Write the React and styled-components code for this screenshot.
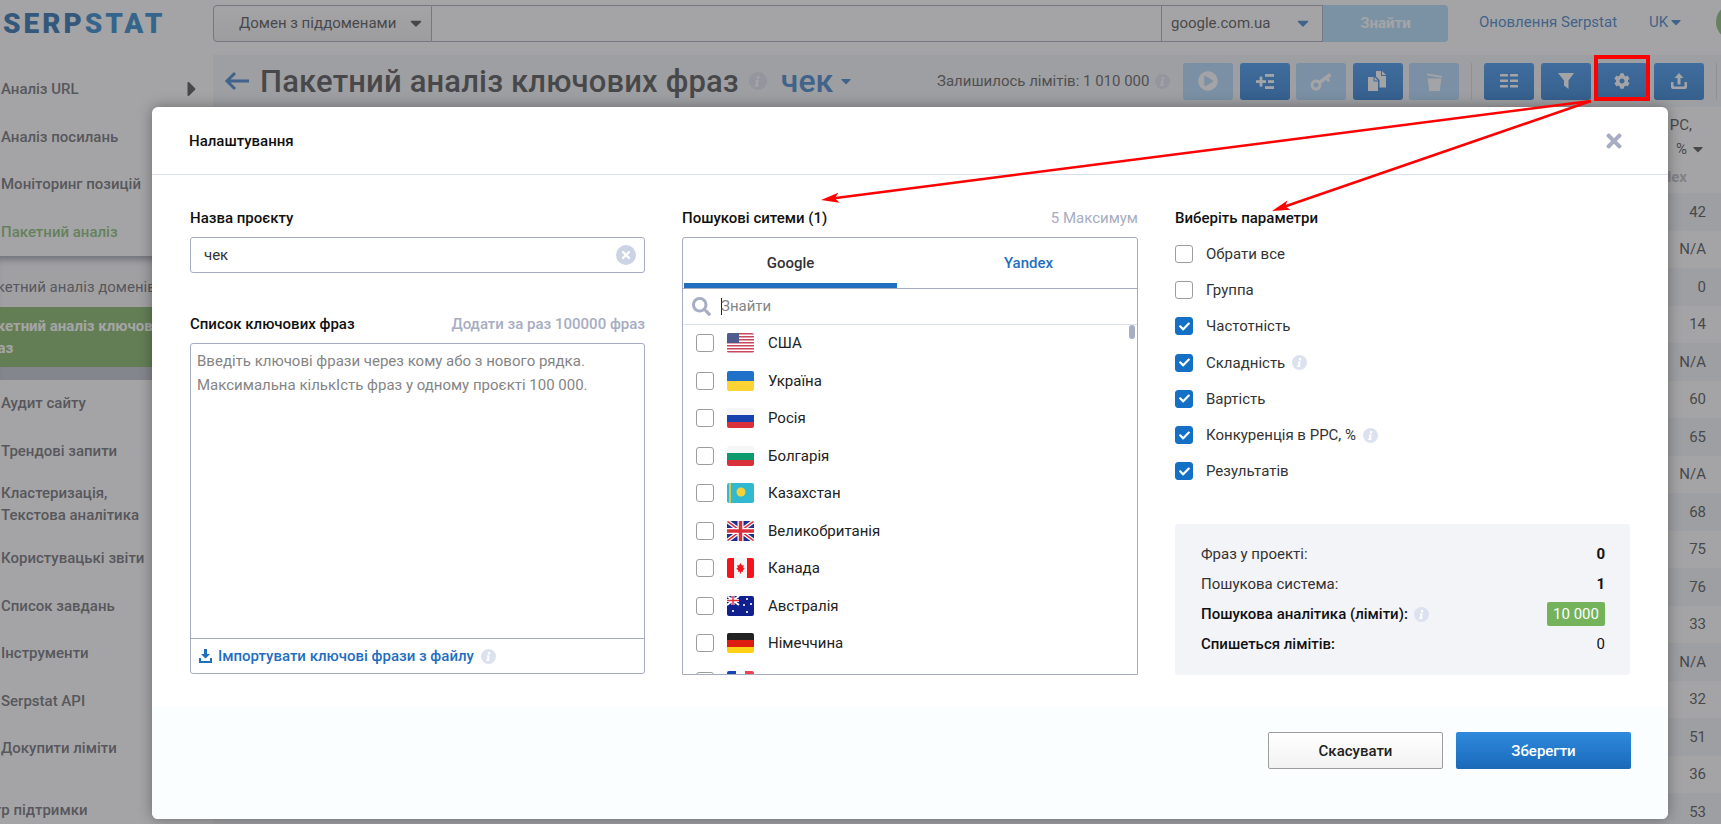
import React from 'react'
import styled, { createGlobalStyle } from 'styled-components'
import { FaCog, FaPlayCircle, FaCaretDown, FaCaretRight, FaSearch, FaTimes, FaCheck, FaInfo } from 'react-icons/fa'

const Global = createGlobalStyle`
  html, body { margin: 0; padding: 0; width: 1721px; height: 824px; overflow: hidden; background: #fff; }
  * { box-sizing: border-box; }
  body { font-family: Roboto, "Liberation Sans", sans-serif; font-size: 15px; color: #000; }
`

const Page = styled.div`
  position: relative;
  width: 1721px;
  height: 824px;
  overflow: hidden;
  display: flex;
  flex-direction: column;
  background: #fff;
`

const TopBar = styled.div`
  height: 50px;
  display: flex;
  align-items: center;
  flex-shrink: 0;
`

const Logo = styled.div`
  width: 213px;
  flex-shrink: 0;
  padding-left: 3px;
  margin-top: -4px;
  font-size: 28px;
  font-weight: 900;
  letter-spacing: 3px;
  color: #05589f;
  span { color: #0a74c4; }
`

const SearchGroup = styled.div`
  display: flex;
  flex-shrink: 0;
  height: 37px;
  margin-top: -4px;
`

const DomainSelect = styled.div`
  width: 219px;
  display: flex;
  align-items: center;
  gap: 11px;
  padding-left: 25px;
  border: 1px solid #9a9dae;
  border-radius: 4px 0 0 4px;
  background: linear-gradient(#fff, #f0f0f0);
  white-space: nowrap;
  color: #333;
`

const SearchInput = styled.div`
  width: 730px;
  border: 1px solid #9a9dae;
  border-left: 0;
  background: #fff;
`

const EngineSelect = styled.div`
  width: 161px;
  display: flex;
  align-items: center;
  justify-content: space-between;
  padding: 0 10px 0 9px;
  border: 1px solid #9a9dae;
  border-left: 0;
  background: #fff;
  color: #333;
  svg { color: #1f6fbf; }
`

const FindButton = styled.div`
  width: 125px;
  display: flex;
  align-items: center;
  justify-content: center;
  border-radius: 0 4px 4px 0;
  background: #a5d5fb;
  color: #fff;
  font-weight: 700;
`

const TopLink = styled.div`
  flex-shrink: 0;
  white-space: nowrap;
  color: #1f6fbf;
  margin-left: ${p => p.$gap}px;
  display: flex;
  align-items: center;
  margin-top: -6px;
`

const Avatar = styled.div`
  width: 36px;
  height: 36px;
  flex-shrink: 0;
  border-radius: 50%;
  background: #74b25b;
  margin-left: 32px;
  margin-top: -6px;
`

const Body = styled.div`
  flex: 1;
  display: flex;
  min-height: 0;
`

const Sidebar = styled.div`
  width: 213px;
  flex-shrink: 0;
  padding-top: 18px;
  overflow: hidden;
`

const MenuItem = styled.div`
  position: relative;
  height: ${p => p.$h || 47.5}px;
  padding-top: 10px;
  padding-left: 1px;
  margin-left: ${p => p.$shift || 0}px;
  white-space: nowrap;
  font-size: 15px;
  line-height: 22px;
  font-weight: 500;
  color: ${p => (p.$active ? '#74b25b' : '#55555c')};
  svg { position: absolute; left: 180px; top: 9px; color: #333; font-size: 24px; }
`

const SubMenu = styled.div`
  margin-top: -2px;
  margin-bottom: 2px;
  height: 124px;
  padding-top: 8px;
  background: #f6f6f8;
  box-shadow: inset 0 8px 6px -4px rgba(60, 70, 90, 0.55), inset 0 -13px 0 #b8bcc8;
`

const SubItem = styled.div`
  margin-left: -22px;
  width: 240px;
  height: ${p => (p.$active ? 60 : 43)}px;
  padding-top: ${p => (p.$active ? 8 : 12)}px;
  line-height: 22px;
  font-size: 15px;
  font-weight: ${p => (p.$active ? 700 : 400)};
  white-space: nowrap;
  background: ${p => (p.$active ? '#70ab4a' : 'transparent')};
  color: ${p => (p.$active ? '#fff' : '#55555c')};
`

const Main = styled.div`
  flex: 1;
  min-width: 0;
  padding-top: 5px;
  display: flex;
  flex-direction: column;
`

const TitleBar = styled.div`
  height: 52px;
  flex-shrink: 0;
  display: flex;
  align-items: center;
  padding: 0 4px 0 11px;
  background: #f2f3f7;
`

const BackArrow = styled.svg`
  width: 25px;
  height: 20px;
  margin-right: 11px;
  flex-shrink: 0;
`

const Title = styled.h1`
  margin: 0;
  font-size: 31px;
  font-weight: 500;
  color: #333;
  letter-spacing: 0.15px;
  white-space: nowrap;
`

const ProjectName = styled.div`
  display: flex;
  align-items: center;
  gap: 5px;
  font-size: 32px;
  font-weight: 500;
  color: #1f6fbf;
  margin-left: 14px;
  svg { font-size: 16px; }
`

const Limits = styled.div`
  margin-left: auto;
  margin-right: 13px;
  display: flex;
  align-items: center;
  white-space: nowrap;
  color: #444;
`

const ToolButton = styled.div`
  width: 50px;
  height: 37px;
  flex-shrink: 0;
  margin-right: 6.4px;
  border-radius: 3px;
  display: flex;
  align-items: center;
  justify-content: center;
  color: #fff;
  background: ${p => (p.$off ? '#a5d3fb' : 'linear-gradient(#2285ec, #0c68c8)')};
`

const ToolDivider = styled.div`
  width: 1px;
  height: 37px;
  flex-shrink: 0;
  background: #d2d4dc;
  margin: 0 ${p => p.$after || 0}px 0 6px;
`

const Table = styled.div`
  flex: 1;
  min-height: 0;
  display: flex;
  flex-direction: column;
  align-items: flex-end;
`

const HeadCell = styled.div`
  width: 100%;
  height: 86px;
  flex-shrink: 0;
  padding: 6px 15px 0 0;
  text-align: right;
  color: #333;
`

const HeadLine = styled.div`
  line-height: 24px;
  margin-right: ${p => p.$right || 0}px;
  svg { vertical-align: -3px; margin-left: 3px; }
`

const HeadSub = styled.div`
  margin: 4px 19px 0 0;
  line-height: 24px;
  font-weight: 700;
  color: #b4b4b4;
`

const Row = styled.div`
  width: 100%;
  height: 37.5px;
  flex-shrink: 0;
  padding-right: 15px;
  display: flex;
  align-items: center;
  justify-content: flex-end;
  color: #333;
  background: ${p => (p.$odd ? '#fff' : '#f2f3f7')};
`

const Dim = styled.div`
  position: absolute;
  inset: 0;
  padding: 107px 53px 5px 152px;
  display: flex;
  background: rgba(90, 90, 92, 0.55);
`

const Modal = styled.div`
  flex: 1;
  display: flex;
  flex-direction: column;
  border-radius: 6px;
  background: #fff;
  box-shadow: 0 0 14px rgba(0, 0, 0, 0.35);
  overflow: hidden;
`

const ModalHead = styled.div`
  height: 68px;
  flex-shrink: 0;
  display: flex;
  align-items: center;
  justify-content: space-between;
  padding: 0 43px 0 37px;
  border-bottom: 1px solid #d9dfee;
  font-weight: 500;
  color: #111;
  svg { color: #a7adc2; font-size: 22px; }
`

const Columns = styled.div`
  display: grid;
  grid-template-columns: 455px 456px 455px;
  gap: 37px;
  padding: 32px 38px 0;
  height: 532px;
  flex-shrink: 0;
`

const Column = styled.div`
  display: flex;
  flex-direction: column;
  min-width: 0;
`

const LabelRow = styled.div`
  height: 22px;
  line-height: 22px;
  flex-shrink: 0;
  display: flex;
  justify-content: space-between;
  font-weight: 500;
  color: #111;
  margin-top: ${p => p.$top || 0}px;
`

const Hint = styled.span`
  color: #a7adc2;
  font-weight: ${p => p.$weight || 400};
`

const NameInput = styled.div`
  height: 36px;
  margin-top: 8px;
  flex-shrink: 0;
  padding: 0 8px 0 13px;
  display: flex;
  align-items: center;
  justify-content: space-between;
  border: 1px solid #a7abc2;
  border-radius: 3px;
  color: #333;
`

const ClearIcon = styled.div`
  width: 20px;
  height: 20px;
  border-radius: 50%;
  background: #ccd3e4;
  color: #fff;
  display: flex;
  align-items: center;
  justify-content: center;
  font-size: 12px;
`

const KeywordBox = styled.div`
  height: 331px;
  margin-top: 8px;
  flex-shrink: 0;
  display: flex;
  flex-direction: column;
  border: 1px solid #a7abc2;
  border-radius: 3px;
`

const Placeholder = styled.div`
  flex: 1;
  padding: 5px 6px;
  line-height: 24px;
  color: #858585;
  border-bottom: 1px solid #a7abc2;
`

const ImportRow = styled.div`
  height: 34px;
  flex-shrink: 0;
  padding-left: 8px;
  display: flex;
  align-items: center;
  font-weight: 500;
  color: #1f6fbf;
`

const InfoDot = styled.span`
  display: inline-flex;
  align-items: center;
  justify-content: center;
  flex-shrink: 0;
  width: ${p => p.$size || 15}px;
  height: ${p => p.$size || 15}px;
  border-radius: 50%;
  margin-left: ${p => p.$gap ?? 6}px;
  background: #dbe1ef;
  color: #fff;
  font-size: ${p => (p.$size || 15) * 0.6}px;
  svg { transform: skewX(-10deg); }
`

const EngineBox = styled.div`
  height: 438px;
  margin-top: 8px;
  flex-shrink: 0;
  border: 1px solid #a7abc2;
  border-top-left-radius: 3px;
  border-top-right-radius: 3px;
  display: flex;
  flex-direction: column;
  overflow: hidden;
`

const Tabs = styled.div`
  height: 51px;
  flex-shrink: 0;
  display: grid;
  grid-template-columns: 213px 1fr;
  column-gap: 23px;
  padding-left: 1px;
  border-bottom: 1px solid #a7abc2;
`

const Tab = styled.div`
  display: flex;
  align-items: center;
  justify-content: center;
  padding-top: 5px;
  font-weight: 500;
  color: ${p => (p.$active ? '#333' : '#1f6fbf')};
  border-bottom: 5px solid ${p => (p.$active ? '#1f6fbf' : 'transparent')};
`

const FindRow = styled.div`
  height: 35.5px;
  flex-shrink: 0;
  display: flex;
  align-items: center;
  padding-left: 9px;
  border-bottom: 1px solid #dde2ef;
  color: #858585;
  svg { color: #a7adc2; font-size: 19px; margin-right: 10px; }
`

const Caret = styled.span`
  width: 1px;
  height: 17px;
  background: #222;
  margin-right: -1px;
`

const EngineList = styled.div`
  position: relative;
  flex: 1;
  min-height: 0;
  overflow: hidden;
`

const ScrollThumb = styled.div`
  position: absolute;
  top: 0;
  right: 2px;
  width: 6px;
  height: 14px;
  border-radius: 3px;
  background: #a7adc2;
`

const EngineRow = styled.div`
  height: 37.5px;
  display: flex;
  align-items: center;
  padding-left: 13px;
  color: #222;
`

const Box = styled.span`
  width: 18px;
  height: 18px;
  flex-shrink: 0;
  border-radius: 3px;
  display: inline-flex;
  align-items: center;
  justify-content: center;
  border: 1px solid ${p => (p.$on ? '#1470c4' : '#9d9d9d')};
  background: ${p => (p.$on ? '#1470c4' : '#fff')};
  color: #fff;
  font-size: 11px;
`

const FlagWrap = styled.svg`
  width: 27px;
  height: 20px;
  margin: 0 14px 0 13px;
  flex-shrink: 0;
  border-radius: 2px;
`

const ParamList = styled.div`
  margin-top: 7px;
  flex-shrink: 0;
  display: flex;
  flex-direction: column;
`

const ParamRow = styled.div`
  height: 36.2px;
  display: flex;
  align-items: center;
  color: #333;
  ${Box} { margin-right: 13px; }
`

const Summary = styled.div`
  margin-top: 35px;
  height: 151px;
  flex-shrink: 0;
  padding: 15px 25px 0 26px;
  border-radius: 3px;
  background: #f3f4f8;
`

const SumRow = styled.div`
  height: 30px;
  display: flex;
  align-items: center;
  justify-content: space-between;
  font-weight: ${p => (p.$bold ? 500 : 400)};
  color: ${p => (p.$bold ? '#111' : '#333')};
`

const SumLabel = styled.span`
  display: flex;
  align-items: center;
`

const SumValue = styled.span`
  font-weight: ${p => (p.$bold ? 700 : 400)};
  color: #111;
`

const Badge = styled.span`
  width: 58px;
  height: 24px;
  display: flex;
  align-items: center;
  justify-content: center;
  border-radius: 2px;
  background: #74b25b;
  color: #fff;
  font-weight: 400;
`

const Footer = styled.div`
  flex: 1;
  display: flex;
  justify-content: flex-end;
  gap: 13px;
  padding: 25px 37px 0 0;
  background: #fbfefe;
`

const Button = styled.button`
  width: 175px;
  height: 37px;
  border-radius: 2px;
  font-family: inherit;
  font-size: 15px;
  font-weight: 500;
  color: ${p => (p.$primary ? '#fff' : '#222')};
  border: ${p => (p.$primary ? '0' : '1px solid #9d9d9d')};
  background: ${p => (p.$primary ? 'linear-gradient(#2f8add, #1a69b8)' : 'linear-gradient(#fff, #f2f2f2)')};
`

const ImportGlyph = styled.svg`
  width: 13px;
  height: 14px;
  margin-right: 6px;
  flex-shrink: 0;
`

const Callouts = styled.svg`
  position: absolute;
  left: 0;
  top: 0;
  width: 1721px;
  height: 824px;
  pointer-events: none;
`

const flags = {
  us: (
    <>
      <rect width="27" height="20" fill="#fff" />
      {[0, 3, 6, 9, 12, 15, 18].map(y => <rect key={y} y={y} width="27" height="1.500" fill="#c9475c" />)}
      <rect width="12" height="10" fill="#4f5a8f" />
    </>
  ),
  ua: (
    <>
      <rect width="27" height="10" fill="#1f72c8" />
      <rect y="10" width="27" height="10" fill="#fdd433" />
    </>
  ),
  ru: (
    <>
      <rect width="27" height="7" fill="#f6f6f6" />
      <rect y="7" width="27" height="7" fill="#1742b0" />
      <rect y="14" width="27" height="6" fill="#d9303c" />
    </>
  ),
  bg: (
    <>
      <rect width="27" height="7" fill="#f6f6f6" />
      <rect y="7" width="27" height="7" fill="#0d9b6d" />
      <rect y="14" width="27" height="6" fill="#d9303c" />
    </>
  ),
  kz: (
    <>
      <rect width="27" height="20" fill="#30b9d0" />
      <circle cx="14" cy="9" r="4.500" fill="#f5d23c" />
      <rect x="2" width="2" height="20" fill="#d8c850" />
    </>
  ),
  gb: (
    <>
      <rect width="27" height="20" fill="#1f2f8f" />
      <path d="M0 0L27 20M27 0L0 20" stroke="#fff" strokeWidth="4" />
      <path d="M0 0L27 20M27 0L0 20" stroke="#d9303c" strokeWidth="1.500" />
      <path d="M13.500 0V20M0 10H27" stroke="#fff" strokeWidth="6" />
      <path d="M13.500 0V20M0 10H27" stroke="#d9303c" strokeWidth="3.500" />
    </>
  ),
  ca: (
    <>
      <rect width="27" height="20" fill="#f5f5f5" />
      <rect width="7" height="20" fill="#f4141c" />
      <rect x="20" width="7" height="20" fill="#f4141c" />
      <path d="M13.500 5l1.500 2.500 1.800-.6-.6 3 1.600.4-2 2.200.3 1.200h-2.100v1.800h-1v-1.800h-2.100l.3-1.200-2-2.200 1.600-.4-.6-3 1.800.6z" fill="#f4141c" />
    </>
  ),
  au: (
    <>
      <rect width="27" height="20" fill="#10208e" />
      <path d="M0 0L12 9M12 0L0 9" stroke="#fff" strokeWidth="2" />
      <path d="M6 0V9M0 4.500H12" stroke="#fff" strokeWidth="3" />
      <path d="M6 0V9M0 4.500H12" stroke="#e03040" strokeWidth="1.500" />
      {[[6, 15], [20, 3], [24, 8], [17, 9], [20, 16]].map(([x, y]) => <circle key={x} cx={x} cy={y} r="1.100" fill="#fff" />)}
    </>
  ),
  de: (
    <>
      <rect width="27" height="7" fill="#222" />
      <rect y="7" width="27" height="7" fill="#dd1c10" />
      <rect y="14" width="27" height="6" fill="#fdd016" />
    </>
  ),
  fr: (
    <>
      <rect width="9" height="20" fill="#1742b0" />
      <rect x="9" width="9" height="20" fill="#fff" />
      <rect x="18" width="9" height="20" fill="#ef4150" />
    </>
  ),
}

const engines = [
  ['us', 'США'], ['ua', 'Україна'], ['ru', 'Росія'], ['bg', 'Болгарія'], ['kz', 'Казахстан'],
  ['gb', 'Великобританія'], ['ca', 'Канада'], ['au', 'Австралія'], ['de', 'Німеччина'], ['fr', 'Франція'],
]

const params = [
  ['Обрати все', false], ['Группа', false], ['Частотність', true], ['Складність', true, true],
  ['Вартість', true], ['Конкуренція в PPC, %', true, true], ['Результатів', true],
]

const values = ['42', 'N/A', '0', '14', 'N/A', '60', '65', 'N/A', '68', '75', '76', '33', 'N/A', '32', '51', '36', '53']

const Info = props => (
  <InfoDot {...props}><FaInfo /></InfoDot>
)

const GridIcon = () => (
  <svg width="18" height="14" viewBox="0 0 18 14" fill="#fff">
    {[0, 5.5, 11].map(y => (
      <g key={y}>
        <rect y={y} width="8" height="2.500" rx="0.500" />
        <rect x="10" y={y} width="8" height="2.500" rx="0.500" />
      </g>
    ))}
  </svg>
)

const AddListIcon = () => (
  <svg width="18" height="15" viewBox="0 0 18 15" fill="#fff">
    <rect x="0" y="6.200" width="10" height="2.800" />
    <rect x="3.600" y="2.600" width="2.800" height="10" />
    <rect x="9" y="0" width="9" height="2.800" />
    <rect x="12" y="6.200" width="6" height="2.800" />
    <rect x="9" y="12.200" width="9" height="2.800" />
  </svg>
)

const KeyIcon = () => (
  <svg width="22" height="19" viewBox="0 0 22 19" fill="none" stroke="#fff">
    <circle cx="6" cy="13" r="4" strokeWidth="3" />
    <path d="M9.500 10.500L20.500 2.500" strokeWidth="3.500" />
    <path d="M16.500 5.500l2.500 4" strokeWidth="3" />
  </svg>
)

const CopyIcon = () => (
  <svg width="19" height="20" viewBox="0 0 19 20" fill="#fff">
    <path d="M0 6h5.500v4.500H10V20H0z" />
    <path d="M6.500 6L10 9.500H6.500z" />
    <path d="M8 0h5v5h5v11.500h-6.500V9L8 5.500z" />
    <path d="M14 0l4 4h-4z" />
  </svg>
)

const CupIcon = () => (
  <svg width="15" height="19" viewBox="0 0 15 19" fill="#fff">
    <path d="M0 1.500L15 4v1.800L0 3.300zM.8 6.500h13.400L12.800 19H2.200z" />
  </svg>
)

const FilterIcon = () => (
  <svg width="16" height="16" viewBox="0 0 16 16" fill="#fff">
    <path d="M0 0h16l-5.500 7.500V16L6 12.500v-5z" />
  </svg>
)

const UploadIcon = () => (
  <svg width="16" height="16" viewBox="0 0 16 16" fill="#fff">
    <path d="M8 0l4.500 5h-3v6.500h-3V5h-3z" />
    <path d="M0 9h2.500v3.500a1 1 0 0 0 1 1h9a1 1 0 0 0 1-1V9H16v5a2 2 0 0 1-2 2H2a2 2 0 0 1-2-2z" />
  </svg>
)

export default function App() {
  return (
    <Page>
      <Global />
      <TopBar>
        <Logo>SERP<span>STAT</span></Logo>
        <SearchGroup>
          <DomainSelect>Домен з піддоменами <FaCaretDown size={18} /></DomainSelect>
          <SearchInput />
          <EngineSelect>google.com.ua <FaCaretDown size={18} /></EngineSelect>
          <FindButton>Знайти</FindButton>
        </SearchGroup>
        <TopLink $gap={31}>Оновлення Serpstat</TopLink>
        <TopLink $gap={32}>UK<FaCaretDown size={16} /></TopLink>
        <Avatar />
      </TopBar>
      <Body>
        <Sidebar>
          <MenuItem>Аналіз URL<FaCaretRight /></MenuItem>
          <MenuItem>Аналіз посилань</MenuItem>
          <MenuItem>Моніторинг позицій</MenuItem>
          <MenuItem $active>Пакетний аналіз</MenuItem>
          <SubMenu>
            <SubItem>Пакетний аналіз доменів</SubItem>
            <SubItem $active>Пакетний аналіз ключових<br />фраз</SubItem>
          </SubMenu>
          <MenuItem>Аудит сайту</MenuItem>
          <MenuItem $h={42.5}>Трендові запити</MenuItem>
          <MenuItem $h={65}>Кластеризація,<br />Текстова аналітика</MenuItem>
          <MenuItem>Користувацькі звіти</MenuItem>
          <MenuItem>Список завдань</MenuItem>
          <MenuItem>Інструменти</MenuItem>
          <MenuItem>Serpstat API</MenuItem>
          <MenuItem $h={62}>Докупити ліміти</MenuItem>
          <MenuItem $shift={-35}>Центр підтримки</MenuItem>
        </Sidebar>
        <Main>
          <TitleBar>
            <BackArrow viewBox="0 0 25 20" fill="none" stroke="#1f6fbf" strokeWidth="3">
              <path d="M25 10H3M11 2l-8 8 8 8" />
            </BackArrow>
            <Title>Пакетний аналіз ключових фраз</Title>
            <Info $size={18} $gap={10} />
            <ProjectName>чек<FaCaretDown /></ProjectName>
            <Limits>Залишилось лімітів: 1 010 000 <Info $gap={6} /></Limits>
            <ToolButton $off><FaPlayCircle size={20} /></ToolButton>
            <ToolButton><AddListIcon /></ToolButton>
            <ToolButton $off><KeyIcon /></ToolButton>
            <ToolButton><CopyIcon /></ToolButton>
            <ToolButton $off><CupIcon /></ToolButton>
            <ToolDivider $after={12} />
            <ToolButton><GridIcon /></ToolButton>
            <ToolButton><FilterIcon /></ToolButton>
            <ToolButton><FaCog size={16} /></ToolButton>
            <ToolButton><UploadIcon /></ToolButton>
            <ToolDivider />
          </TitleBar>
          <Table>
            <HeadCell>
              <HeadLine $right={14}>PC,</HeadLine>
              <HeadLine>%<FaCaretDown size={16} /></HeadLine>
              <HeadSub>Нех</HeadSub>
            </HeadCell>
            {values.map((v, i) => <Row key={i} $odd={i % 2 === 1}>{v}</Row>)}
          </Table>
        </Main>
      </Body>

      <Dim>
        <Modal>
          <ModalHead>Налаштування <FaTimes /></ModalHead>
          <Columns>
            <Column>
              <LabelRow>Назва проєкту</LabelRow>
              <NameInput>чек <ClearIcon><FaTimes /></ClearIcon></NameInput>
              <LabelRow $top={40}>Список ключових фраз <Hint $weight={500}>Додати за раз 100000 фраз</Hint></LabelRow>
              <KeywordBox>
                <Placeholder>
                  Введіть ключові фрази через кому або з нового рядка.<br />
                  Максимальна кількІсть фраз у одному проєкті 100 000.
                </Placeholder>
                <ImportRow>
                  <ImportGlyph viewBox="0 0 13 14" fill="#1f6fbf">
                    <path d="M5 0h3v5h3L6.500 9.500 2 5h3z" />
                    <path d="M0 9h2v3h9V9h2v5H0z" />
                  </ImportGlyph>
                  Імпортувати ключові фрази з файлу <Info $gap={7} />
                </ImportRow>
              </KeywordBox>
            </Column>
            <Column>
              <LabelRow>Пошукові ситеми (1) <Hint>5 Максимум</Hint></LabelRow>
              <EngineBox>
                <Tabs>
                  <Tab $active>Google</Tab>
                  <Tab>Yandex</Tab>
                </Tabs>
                <FindRow><FaSearch /><Caret />Знайти</FindRow>
                <EngineList>
                  <ScrollThumb />
                  {engines.map(([code, name]) => (
                    <EngineRow key={code}>
                      <Box />
                      <FlagWrap viewBox="0 0 27 20">{flags[code]}</FlagWrap>
                      {name}
                    </EngineRow>
                  ))}
                </EngineList>
              </EngineBox>
            </Column>
            <Column>
              <LabelRow>Виберіть параметри</LabelRow>
              <ParamList>
                {params.map(([name, on, info]) => (
                  <ParamRow key={name}>
                    <Box $on={on}>{on && <FaCheck />}</Box>
                    {name}
                    {info && <Info $gap={7} />}
                  </ParamRow>
                ))}
              </ParamList>
              <Summary>
                <SumRow>Фраз у проекті: <SumValue $bold>0</SumValue></SumRow>
                <SumRow>Пошукова система: <SumValue $bold>1</SumValue></SumRow>
                <SumRow $bold>
                  <SumLabel>Пошукова аналітика (ліміти): <Info $gap={6} /></SumLabel>
                  <Badge>10 000</Badge>
                </SumRow>
                <SumRow $bold>Спишеться лімітів: <SumValue>0</SumValue></SumRow>
              </Summary>
            </Column>
          </Columns>
          <Footer>
            <Button>Скасувати</Button>
            <Button $primary>Зберегти</Button>
          </Footer>
        </Modal>
      </Dim>

      <Callouts viewBox="0 0 1721 824" fill="none">
        <rect x="1596" y="57" width="52" height="42" stroke="#f00" strokeWidth="4" />
        <path d="M1591 101L832 198.500" stroke="#f00" strokeWidth="2.500" />
        <path d="M821 200l18.500 2.700-4.500-4.500 3.200-5.500z" fill="#f00" />
        <path d="M1591 101L1282 207.500" stroke="#f00" strokeWidth="2.500" />
        <path d="M1272 211l18.600-1.200-5.400-3.400 2.200-6z" fill="#f00" />
      </Callouts>
    </Page>
  )
}
